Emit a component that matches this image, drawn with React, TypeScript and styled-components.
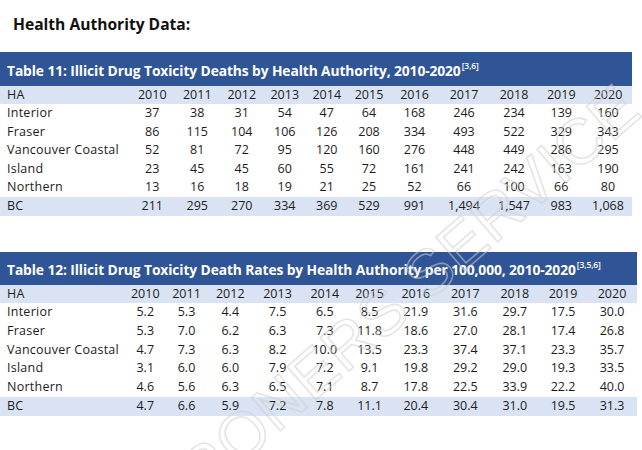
import React from "react";
import styled, { createGlobalStyle } from "styled-components";

const Global = createGlobalStyle`
  html, body { margin: 0; padding: 0; background: #fff; }
  body {
    font-family: "Open Sans", "Noto Sans", sans-serif;
    color: #1c1c1c;
    width: 642px;
    height: 450px;
    overflow: hidden;
  }
`;

const Page = styled.div`
  position: relative;
  width: 642px;
  height: 450px;
  overflow: hidden;
  display: flex;
  flex-direction: column;
`;

const Heading = styled.h2`
  margin: 14px 0 0 13px;
  font-size: 15.6px;
  line-height: 20px;
  font-weight: 700;
  color: #111;
`;

const Table = styled.section<{ $top: number; $width: number }>`
  margin-top: ${(p) => p.$top}px;
  width: ${(p) => p.$width}px;
  display: flex;
  flex-direction: column;
`;

const TitleBar = styled.div<{ $h: number }>`
  height: ${(p) => p.$h}px;
  box-sizing: border-box;
  background: #2f5597;
  color: #fff;
  font-weight: 700;
  font-size: 13.8px;
  letter-spacing: -0.1px;
  display: flex;
  align-items: center;
  padding: 3px 0 0 7px;
  white-space: nowrap;
`;

const Sup = styled.sup`
  font-size: 8.5px;
  font-weight: 600;
  position: relative;
  top: -5px;
  vertical-align: baseline;
  margin-left: 1px;
`;

const Row = styled.div<{ $cols: string; $h: number; $shade?: boolean }>`
  display: grid;
  grid-template-columns: ${(p) => p.$cols};
  height: ${(p) => p.$h}px;
  align-items: center;
  background: ${(p) => (p.$shade ? "#dae3f3" : "transparent")};
  font-size: 12.5px;
  line-height: 1;
`;

const Label = styled.span`
  padding-left: 7px;
  white-space: nowrap;
  letter-spacing: 0.25px;
`;

const Num = styled.span`
  text-align: center;
  white-space: nowrap;
`;

const Watermark = styled.div`
  position: absolute;
  left: 372px;
  top: 322px;
  transform: translate(-50%, -50%) rotate(-41deg);
  font-family: "Liberation Sans", sans-serif;
  font-size: 64px;
  letter-spacing: 1px;
  white-space: nowrap;
  color: transparent;
  -webkit-text-stroke: 1.6px rgba(205, 205, 205, 0.55);
  pointer-events: none;
  z-index: 2;
`;

type TableData = {
  title: string;
  refs: string;
  cols: string;
  width: number;
  top: number;
  barH: number;
  headH: number;
  rowH: number;
  rows: [string, ...string[]][];
};

const years = ["2010", "2011", "2012", "2013", "2014", "2015", "2016", "2017", "2018", "2019", "2020"];

const tables: TableData[] = [
  {
    title: "Table 11: Illicit Drug Toxicity Deaths by Health Authority, 2010-2020",
    refs: "[3,6]",
    cols: "130px 44.5px 45.5px 43.5px 42.5px 41.5px 43px 48px 51px 49px 45.5px 48px",
    width: 632,
    top: 18,
    barH: 34,
    headH: 18,
    rowH: 18.6,
    rows: [
      ["Interior", "37", "38", "31", "54", "47", "64", "168", "246", "234", "139", "160"],
      ["Fraser", "86", "115", "104", "106", "126", "208", "334", "493", "522", "329", "343"],
      ["Vancouver Coastal", "52", "81", "72", "95", "120", "160", "276", "448", "449", "286", "295"],
      ["Island", "23", "45", "45", "60", "55", "72", "161", "241", "242", "163", "190"],
      ["Northern", "13", "16", "18", "19", "21", "25", "52", "66", "100", "66", "80"],
      ["BC", "211", "295", "270", "334", "369", "529", "991", "1,494", "1,547", "983", "1,068"],
    ],
  },
  {
    title: "Table 12: Illicit Drug Toxicity Death Rates by Health Authority per 100,000, 2010-2020",
    refs: "[3,5,6]",
    cols: "125px 40.5px 42px 45.5px 49px 45.5px 44px 48.5px 50.5px 48.5px 48px 50px",
    width: 637,
    top: 36.4,
    barH: 33,
    headH: 18,
    rowH: 18.8,
    rows: [
      ["Interior", "5.2", "5.3", "4.4", "7.5", "6.5", "8.5", "21.9", "31.6", "29.7", "17.5", "30.0"],
      ["Fraser", "5.3", "7.0", "6.2", "6.3", "7.3", "11.8", "18.6", "27.0", "28.1", "17.4", "26.8"],
      ["Vancouver Coastal", "4.7", "7.3", "6.3", "8.2", "10.0", "13.5", "23.3", "37.4", "37.1", "23.3", "35.7"],
      ["Island", "3.1", "6.0", "6.0", "7.9", "7.2", "9.1", "19.8", "29.2", "29.0", "19.3", "33.5"],
      ["Northern", "4.6", "5.6", "6.3", "6.5", "7.1", "8.7", "17.8", "22.5", "33.9", "22.2", "40.0"],
      ["BC", "4.7", "6.6", "5.9", "7.2", "7.8", "11.1", "20.4", "30.4", "31.0", "19.5", "31.3"],
    ],
  },
];

function DataTable({ t }: { t: TableData }) {
  return (
    <Table $top={t.top} $width={t.width}>
      <TitleBar $h={t.barH}>
        {t.title}
        <Sup>{t.refs}</Sup>
      </TitleBar>
      <Row $cols={t.cols} $h={t.headH} $shade>
        <Label>HA</Label>
        {years.map((y) => (
          <Num key={y}>{y}</Num>
        ))}
      </Row>
      {t.rows.map(([name, ...vals]) => (
        <Row key={name} $cols={t.cols} $h={t.rowH} $shade={name === "BC"}>
          <Label>{name}</Label>
          {vals.map((v, i) => (
            <Num key={i}>{v}</Num>
          ))}
        </Row>
      ))}
    </Table>
  );
}

export default function App() {
  return (
    <>
      <Global />
      <Page>
        <Heading>Health Authority Data:</Heading>
        {tables.map((t) => (
          <DataTable key={t.title} t={t} />
        ))}
        <Watermark aria-hidden="true">CORONERS SERVICE</Watermark>
      </Page>
    </>
  );
}
